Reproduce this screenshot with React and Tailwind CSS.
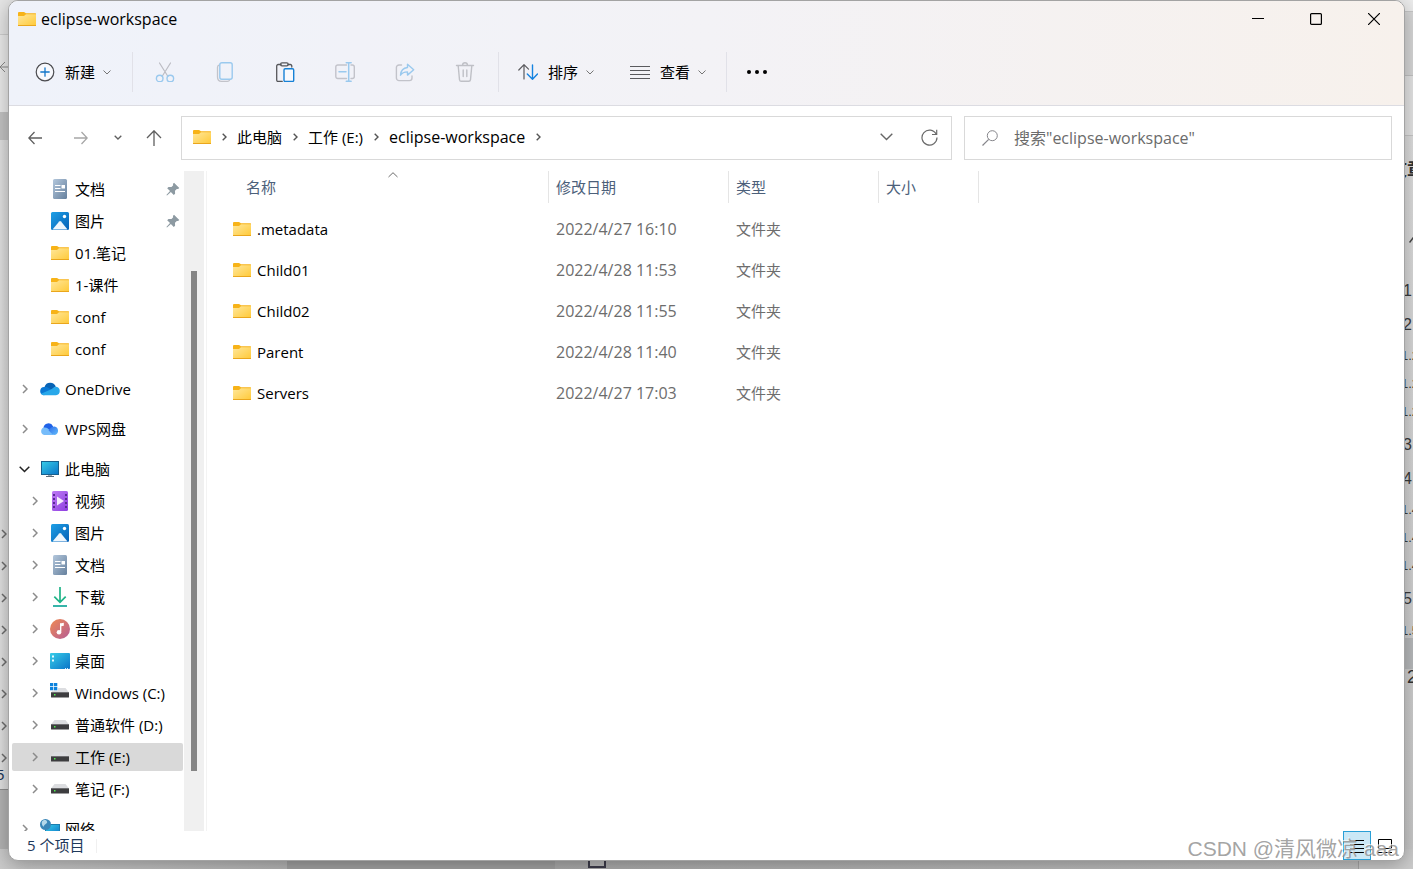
import { useState } from "react";

// ---------- icons ----------

const FolderIcon = () => (
  <svg width="18" height="14" viewBox="0 0 18 14" className="shrink-0">
    <defs>
      <linearGradient id="folderFront" x1="0" y1="0" x2="1" y2="1">
        <stop offset="0" stopColor="#ffe79b" />
        <stop offset="1" stopColor="#ffc937" />
      </linearGradient>
    </defs>
    <path d="M0 1a1 1 0 0 1 1-1h5l2 1.300h9.500a.5.5 0 0 1 .5.500V5H0z" fill="#f7b318" />
    <path d="M0 4h6l2-1.700h10V13.500a.5.5 0 0 1-.5.500H.5a.5.5 0 0 1-.5-.5z" fill="url(#folderFront)" />
    <path d="M0 13h18v.5a.5.5 0 0 1-.5.500H.5a.5.5 0 0 1-.5-.5z" fill="#eaa61c" />
  </svg>
);

const ChevronIcon = ({ className, d = "M1 1l4 4-4 4", w = 6, h = 10, width = "1.5" }) => (
  <svg width={w} height={h} viewBox={`0 0 ${w} ${h}`} fill="none" stroke="currentColor" strokeWidth={width} className={`shrink-0 ${className}`}>
    <path d={d} />
  </svg>
);

const SmallDown = () => <ChevronIcon className="text-[#757575]" d="M.5.5l3.500 3.500L7.500.5" w={8} h={5} width="1" />;

const Stroke = ({ size = 20, children }) => (
  <svg width={size} height={size} viewBox={`0 0 ${size} ${size}`} fill="none" className="shrink-0" strokeLinecap="round" strokeLinejoin="round">
    {children}
  </svg>
);

const NewIcon = () => (
  <Stroke>
    <circle cx="10" cy="10" r="8.800" stroke="#4b4b4f" strokeWidth="1.200" fill="#f8f9fd" />
    <path d="M10 5.800v8.400M5.800 10h8.400" stroke="#1276c9" strokeWidth="1.300" />
  </Stroke>
);

const CutIcon = () => (
  <Stroke>
    <path d="M4.500 1l8.300 13.200M15.500 1L7.200 14.200" stroke="#bcbdc4" strokeWidth="1.200" />
    <circle cx="4.700" cy="16.500" r="3.300" stroke="#9ac9ee" strokeWidth="1.400" />
    <circle cx="15.300" cy="16.500" r="3.300" stroke="#9ac9ee" strokeWidth="1.400" />
  </Stroke>
);

const CopyIcon = () => (
  <Stroke>
    <path d="M4 3.200C2.800 3.600 2.500 4.300 2.500 5.500V15c0 3 1.500 4.300 4 4.300h6c1 0 1.700-.4 2-1" stroke="#c2c3ca" strokeWidth="1.300" />
    <rect x="4.800" y=".7" width="12.400" height="16.500" rx="2" stroke="#9ac9ee" strokeWidth="1.400" />
  </Stroke>
);

const PasteIcon = () => (
  <Stroke>
    <path d="M6 2.500H3.200A1.500 1.500 0 0 0 1.700 4v14a1.500 1.500 0 0 0 1.500 1.500h4M13 2.500h2.300A1.500 1.500 0 0 1 16.800 4v1" stroke="#55565a" strokeWidth="1.300" />
    <rect x="5.600" y=".8" width="7.600" height="3" rx="1.400" stroke="#55565a" strokeWidth="1.200" />
    <rect x="9" y="6.700" width="9.700" height="12.800" rx="1.200" stroke="#1681d6" strokeWidth="1.400" fill="#f8f9fd" />
  </Stroke>
);

const RenameIcon = () => (
  <Stroke>
    <path d="M11.500 3H2.800A2 2 0 0 0 .8 5v9.500a2 2 0 0 0 2 2h8.700M16 3h1.300a2 2 0 0 1 2 2v9.500a2 2 0 0 1-2 2H16" stroke="#c2c3ca" strokeWidth="1.400" />
    <path d="M13.700 1v18M11.300.7h4.800M11.300 19.300h4.800M4 9.800h7" stroke="#9ac9ee" strokeWidth="1.500" />
  </Stroke>
);

const ShareIcon = () => (
  <Stroke>
    <path d="M6.500 3H4a2.600 2.600 0 0 0-2.600 2.600V16A2.600 2.600 0 0 0 4 18.600h10.400A2.600 2.600 0 0 0 17 16v-2" stroke="#c2c3ca" strokeWidth="1.400" />
    <path d="M12.500 2.300l6.200 5.400-6.200 5.400v-3.200c-3.500 0-5.600 1-7 3.300.3-4.200 2.500-7.300 7-7.700z" stroke="#9ac9ee" strokeWidth="1.400" />
  </Stroke>
);

const TrashIcon = () => (
  <Stroke>
    <path d="M1.500 3.500h17M7.500 3.300C7.600 1.600 8.500.8 10 .8s2.400.8 2.500 2.500M3.200 3.700l1.300 14a1.800 1.800 0 0 0 1.800 1.600h7.400a1.800 1.800 0 0 0 1.800-1.600l1.300-14M8.200 8v6.500M11.800 8v6.500" stroke="#bfc0c6" strokeWidth="1.400" />
  </Stroke>
);

const SortIcon = () => (
  <Stroke>
    <path d="M6 17V3M.8 8L6 2.700l4.500 4.500" stroke="#5a5a5e" strokeWidth="1.200" />
    <path d="M14.500 3v14M9.300 12l5.200 5.300L19.500 12" stroke="#1583e0" strokeWidth="1.400" />
  </Stroke>
);

const ViewIcon = () => (
  <svg width="20" height="20" viewBox="0 0 20 20" className="shrink-0">
    <path d="M0 4.500h20M0 8.500h20M0 12.500h20M0 16.500h20" stroke="#5a5a5e" strokeWidth="1.200" />
  </svg>
);

const DocIcon = () => (
  <svg width="20" height="20" viewBox="0 0 20 20" className="shrink-0">
    <defs>
      <linearGradient id="doc" x1="0" y1="0" x2="1" y2="1">
        <stop offset="0" stopColor="#b3c7dc" />
        <stop offset="1" stopColor="#66809d" />
      </linearGradient>
    </defs>
    <rect x="3" width="14" height="20" rx="1.500" fill="url(#doc)" />
    <path d="M5 6.500h5.500M5 9.500h5.500M5 12.500h10" stroke="#fff" strokeWidth="1.200" />
    <rect x="11.500" y="6" width="3.500" height="3.500" fill="#fff" />
  </svg>
);

const PictureIcon = () => (
  <svg width="20" height="20" viewBox="0 0 20 20" className="shrink-0">
    <defs>
      <linearGradient id="pic" x1="0" y1="0" x2="1" y2="1">
        <stop offset="0" stopColor="#1ea0e6" />
        <stop offset="1" stopColor="#0660b6" />
      </linearGradient>
    </defs>
    <rect x="1" y="1" width="18" height="18" rx="1.500" fill="url(#pic)" />
    <path d="M2.500 18.500l6.700-8a1.200 1.200 0 0 1 1.800 0l6.500 8z" fill="#eef6fd" />
    <circle cx="14.500" cy="5.500" r="1.700" fill="#fff" />
  </svg>
);

const OneDriveIcon = () => (
  <svg width="20" height="14" viewBox="0 0 20 14" className="shrink-0">
    <path d="M4.500 5A6 6 0 0 1 15.800 4.600L10 9z" fill="#0863b5" />
    <path d="M4 13.200A4.100 4.100 0 0 1 4.600 5c2-.4 3.600.4 5 1.400L13 9 4 13.200z" fill="#0a78d4" />
    <path d="M12 7c1-1.500 2.500-2.500 4.200-2.300A4.300 4.300 0 0 1 16 13.200H4c-1.200 0-2.300-.6-3-1.500z" fill="#28a8ea" />
  </svg>
);

const WpsCloudIcon = () => (
  <svg width="20" height="14" viewBox="0 0 20 14" className="shrink-0">
    <defs>
      <linearGradient id="wps" x1="0" y1="0" x2="1" y2="1">
        <stop offset="0" stopColor="#2d6bea" />
        <stop offset="1" stopColor="#62bdfb" />
      </linearGradient>
    </defs>
    <path d="M3.500 6A5 5 0 0 1 13 4.200c.2 2-.7 4-2.500 6z" fill="#1f62e8" />
    <path d="M4.500 5.500c3 0 4.200 1.600 5.800 3.800 1.300 1.900 2.200 3 4.200 3.700H4.200a3.800 3.800 0 0 1 .3-7.500z" fill="#76bcfa" />
    <path d="M8.500 8.300c1.800-2.400 3.400-3.800 6-3.800a4.400 4.400 0 0 1 .5 8.500c-3 0-4.500-2.700-6.500-4.700z" fill="url(#wps)" />
  </svg>
);

const ScreenGradient = ({ id }) => (
  <linearGradient id={id} x1="0" y1="0" x2="1" y2="1">
    <stop offset="0" stopColor="#37cde8" />
    <stop offset="1" stopColor="#0b74c8" />
  </linearGradient>
);

const ComputerIcon = () => (
  <svg width="20" height="18" viewBox="0 0 20 18" className="shrink-0">
    <defs><ScreenGradient id="screen" /></defs>
    <path d="M8 14h4v3H8z" fill="#9aa7b3" />
    <path d="M6 16.500h8" stroke="#5d6b78" />
    <rect x="1.500" y="1.500" width="17" height="13" fill="url(#screen)" stroke="#17608e" />
  </svg>
);

const VideoIcon = () => (
  <svg width="20" height="20" viewBox="0 0 20 20" className="shrink-0">
    <defs>
      <linearGradient id="video" x1="0" y1="0" x2="1" y2="1">
        <stop offset="0" stopColor="#bd7af4" />
        <stop offset="1" stopColor="#8e3ee0" />
      </linearGradient>
    </defs>
    <rect x="2" width="16" height="20" rx="1.500" fill="url(#video)" />
    <path d="M4 3v15M16 3v15" stroke="#5a2a94" strokeWidth="2" strokeDasharray="2 2" />
    <path d="M7 5.500v9l7-4.500z" fill="#f5ecfd" />
  </svg>
);

const DownloadIcon = () => (
  <svg width="20" height="20" viewBox="0 0 20 20" fill="none" className="shrink-0">
    <path d="M10 0v15M4.300 9.700L10 15.300l5.700-5.600" stroke="#1fb488" strokeWidth="1.700" />
    <path d="M3 19h14" stroke="#14a79a" strokeWidth="1.700" />
  </svg>
);

const MusicIcon = () => (
  <svg width="20" height="20" viewBox="0 0 20 20" className="shrink-0">
    <defs>
      <linearGradient id="music" x1="0" y1="0" x2="1" y2="1">
        <stop offset="0" stopColor="#f08a52" />
        <stop offset="1" stopColor="#b45d97" />
      </linearGradient>
    </defs>
    <circle cx="10" cy="10" r="10" fill="url(#music)" />
    <path d="M10 4.500l3.800-.8v3l-2.600.6v5.600z" fill="#fff" />
    <path d="M10 4.500h1.200V13H10z" fill="#fff" />
    <circle cx="9" cy="13.200" r="2.300" fill="#fff" />
  </svg>
);

const DesktopIcon = () => (
  <svg width="20" height="16" viewBox="0 0 20 16" className="shrink-0">
    <defs><ScreenGradient id="desk" /></defs>
    <rect width="20" height="16" rx="1" fill="url(#desk)" />
    <path d="M2 2.500h2v2H2zM2 6.500h2v2H2z" fill="#e8fbff" />
    <path d="M15 15.500h1M17 15.500h1" stroke="#cfeaff" />
  </svg>
);

const DriveIcon = ({ system }) => (
  <svg width="20" height="20" viewBox="0 0 20 20" className="shrink-0">
    <path d="M4.500 5h11L19 9.500H1z" fill="#dcdde0" />
    <rect x="1" y="9" width="18" height="5.500" rx=".5" fill="#3d3d3f" />
    <path d="M1 9.500h18" stroke="#6f6f72" />
    <rect x="4" y="11" width="1.500" height="1.500" fill="#4df04d" />
    {system && (
      <g>
        <path d="M0 0h8v7.500H0z" fill="#fff" />
        <path d="M0 0h3.300v3.300H0zM4 0h3.300v3.300H4zM0 4h3.300v3.300H0zM4 4h3.300v3.300H4z" fill="#0c82dc" />
      </g>
    )}
  </svg>
);

const NetworkIcon = () => (
  <svg width="20" height="20" viewBox="0 0 20 20" className="shrink-0">
    <defs><ScreenGradient id="net" /></defs>
    <rect x="5.500" y="5.500" width="14" height="11" fill="url(#net)" stroke="#1b7eaf" />
    <circle cx="5.500" cy="5.500" r="5.500" fill="#3b86b8" />
    <path d="M2 2.500c2-2 4-1.800 5 0S4.500 5 4 7 1 5 2 2.500z" fill="#b5d8ea" />
  </svg>
);

const PinIcon = () => (
  <svg width="14" height="14" viewBox="0 0 14 14" className="shrink-0">
    <path d="M8 .8L13.300 6l-1.200 1.100-1.300-.2-1.800 1.800.1 3-1.400 1.300L4.900 10 1 13.600l-.6-.6L4 9.100 1.200 6.300l1.300-1.400 3 .1 1.700-1.800L6.900 2z" fill="#8d9aa2" />
  </svg>
);

// ---------- data ----------

const quickItems = [
  { label: "文档", Icon: DocIcon, pinned: true },
  { label: "图片", Icon: PictureIcon, pinned: true },
  { label: "01.笔记", Icon: FolderIcon },
  { label: "1-课件", Icon: FolderIcon },
  { label: "conf", Icon: FolderIcon },
  { label: "conf", Icon: FolderIcon },
];

const pcItems = [
  { label: "视频", Icon: VideoIcon },
  { label: "图片", Icon: PictureIcon },
  { label: "文档", Icon: DocIcon },
  { label: "下载", Icon: DownloadIcon },
  { label: "音乐", Icon: MusicIcon },
  { label: "桌面", Icon: DesktopIcon },
  { label: "Windows (C:)", Icon: () => <DriveIcon system /> },
  { label: "普通软件 (D:)", Icon: DriveIcon },
  { label: "工作 (E:)", Icon: DriveIcon },
  { label: "笔记 (F:)", Icon: DriveIcon },
];

const files = [
  { name: ".metadata", date: "2022/4/27 16:10" },
  { name: "Child01", date: "2022/4/28 11:53" },
  { name: "Child02", date: "2022/4/28 11:55" },
  { name: "Parent", date: "2022/4/28 11:40" },
  { name: "Servers", date: "2022/4/27 17:03" },
];

const editTools = [
  { label: "剪切", Icon: CutIcon },
  { label: "复制", Icon: CopyIcon },
  { label: "粘贴", Icon: PasteIcon },
  { label: "重命名", Icon: RenameIcon },
  { label: "共享", Icon: ShareIcon },
  { label: "删除", Icon: TrashIcon },
];

const outline = [
  { text: "1", top: "top-[281px]" },
  { text: "2", top: "top-[315px]" },
  { text: "1.2", top: "top-[346px]", sub: true },
  { text: "1.2", top: "top-[374px]", sub: true },
  { text: "1.2", top: "top-[402px]", sub: true },
  { text: "3", top: "top-[435px]" },
  { text: "4", top: "top-[469px]" },
  { text: "1.4", top: "top-[500px]", sub: true },
  { text: "1.4", top: "top-[528px]", sub: true },
  { text: "1.4", top: "top-[556px]", sub: true },
  { text: "5", top: "top-[589px]" },
  { text: "1.5", top: "top-[621px]", sub: true },
];

// ---------- parts ----------

// windows that lie behind the explorer, only their edges are visible
const Backdrop = () => (
  <div className="absolute inset-0 overflow-hidden bg-[#b4b4b4] font-['Liberation_Sans','Noto_Sans_CJK_SC',sans-serif]" aria-hidden="true">
    <div className="absolute left-0 top-0 h-[790px] w-6 border-b border-[#8f8f8f] bg-linear-to-r from-[#e2e2e2] to-[#cfcfcf]">
      <div className="h-[35px] border-b border-[#cfcfcf] bg-[#e6e6e6]" />
      <div className="h-[77px] bg-[#ebebeb]" />
      <div className="h-7 bg-[#c4c4c4]" />
      <svg width="9" height="10" viewBox="0 0 9 10" className="absolute left-0 top-[62px]" fill="none" stroke="#8a8a8a">
        <path d="M5 0L0 5l5 5M0 5h9" />
      </svg>
      <div className="absolute left-[1px] top-[529px] flex flex-col gap-[22px] text-[#6e6e6e]">
        {[0, 1, 2, 3, 4, 5, 6, 7].map((i) => (
          <ChevronIcon key={i} />
        ))}
      </div>
      <span className="absolute -left-[4px] top-[765px] text-[15px] leading-5 text-[#1e395b]">5</span>
    </div>
    <div className="absolute right-0 top-0 h-full w-6 bg-linear-to-b from-[#e3e3e3] to-[#cacaca]">
      <div className="h-[12px] border-b border-[#c8c8c8] bg-[#ededed]" />
      <div className="h-[64px] border-b border-[#c4c4c4] bg-[#d9d9d9]" />
      <div className="h-[60px] border-b border-[#c8c8c8] bg-[#e6e6e6]" />
      <span className="absolute left-0 top-[158px] whitespace-nowrap text-[18px] font-bold leading-6 text-[#333]">文章</span>
      <svg width="8" height="6" viewBox="0 0 8 6" className="absolute left-[20px] top-[237px]" fill="none" stroke="#444" strokeWidth="1.500">
        <path d="M.5 5.500L4 1l3.500 4.500" />
      </svg>
      {outline.map((o) => (
        <span key={o.top} className={`absolute ${o.top} leading-5 text-[#3c3c3c] ${o.sub ? "left-[12px] text-[13px]" : "left-[14px] text-[16px]"}`}>
          {o.text}
        </span>
      ))}
      <div className="absolute left-0 top-[638px] h-[31px] w-full bg-[#b9bbbd]" />
      <span className="absolute left-[18px] top-[665px] text-[18px] leading-6 text-[#333]">2</span>
    </div>
    <div className="absolute bottom-0 left-0 flex h-5 w-full">
      <div className="w-[287px] bg-linear-to-r from-[#cbcbcb] to-[#b6b6b6]" />
      <div className="w-[268px] bg-[#a2a2a2]" />
      <div className="flex-1 bg-linear-to-r from-[#acacac] to-[#c4c4c4]" />
      <div className="w-[55px] border-l border-[#a8a8a8] bg-[#cdcdcd]" />
    </div>
    <div className="absolute bottom-[1px] left-[588px] h-[14px] w-[18px] border-2 border-[#3d3c4a] bg-[#bbb]" />
  </div>
);

const Divider = ({ className }) => <div className={`h-10 w-px shrink-0 bg-[#e1e1e8] ${className}`} />;

const MenuButton = ({ label, Icon, className }) => (
  <button type="button" className={`flex shrink-0 items-center gap-[10px] ${className}`}>
    <Icon />
    <span className="w-[30px] whitespace-nowrap">{label}</span>
    <span className="-ml-[2px]"><SmallDown /></span>
  </button>
);

const Header = () => (
  <header className="shrink-0 border-b border-[#dcdce2] bg-linear-to-r from-[#eff2fa] via-[#f3f2f6] to-[#f7f1ec]">
    <div className="flex h-9 items-center pl-[9px]">
      <FolderIcon />
      <h1 className="ml-[5px] flex-1 text-base leading-5">eclipse-workspace</h1>
      <button type="button" aria-label="最小化" className="flex h-full w-[58px] items-center justify-center">
        <svg width="12" height="12" viewBox="0 0 12 12"><path d="M0 5.500h12" stroke="#000" /></svg>
      </button>
      <button type="button" aria-label="最大化" className="flex h-full w-[58px] items-center justify-center">
        <svg width="12" height="12" viewBox="0 0 12 12" fill="none"><rect x=".6" y=".6" width="10.800" height="10.800" rx="1" stroke="#000" strokeWidth="1.200" /></svg>
      </button>
      <button type="button" aria-label="关闭" className="mr-[1px] flex h-full w-[58px] items-center justify-center">
        <svg width="12" height="12" viewBox="0 0 12 12"><path d="M0 0l12 12M12 0L0 12" stroke="#000" strokeWidth="1.200" /></svg>
      </button>
    </div>
    <div className="flex h-[68px] items-center pl-[26px] pt-[2px]">
      <MenuButton label="新建" Icon={NewIcon} />
      <Divider className="ml-[21px] mr-[2px]" />
      {editTools.map(({ label, Icon }) => (
        <button key={label} type="button" aria-label={label} className="flex h-10 w-[60px] shrink-0 items-center justify-center">
          <Icon />
        </button>
      ))}
      <Divider className="ml-[3px]" />
      <MenuButton label="排序" Icon={SortIcon} className="ml-[19px]" />
      <MenuButton label="查看" Icon={ViewIcon} className="ml-9" />
      <Divider className="ml-5" />
      <button type="button" aria-label="更多" className="flex h-10 w-[60px] shrink-0 items-center justify-center">
        <svg width="20" height="4" viewBox="0 0 20 4">
          <circle cx="2" cy="2" r="2" /><circle cx="10" cy="2" r="2" /><circle cx="18" cy="2" r="2" />
        </svg>
      </button>
    </div>
  </header>
);

const CrumbArrow = () => (
  <span className="flex w-[26px] shrink-0 justify-center">
    <ChevronIcon className="text-[#555]" d="M.7.7L4 4 .7 7.300" w={5} h={8} width="1.400" />
  </span>
);

const AddressBar = () => {
  const [query, setQuery] = useState("");
  const navButton = "flex h-11 shrink-0 items-center justify-center";

  return (
    <div className="flex h-[65px] shrink-0 items-start pl-[3px] pr-3 pt-[10px]">
      <button type="button" aria-label="后退" className={`${navButton} w-[46px]`}>
        <svg width="14" height="14" viewBox="0 0 14 14" fill="none" stroke="#5f5f5f" strokeWidth="1.300"><path d="M14 7H.8M6.500 1L.8 7l5.700 6" /></svg>
      </button>
      <button type="button" aria-label="前进" className={`${navButton} w-[46px]`}>
        <svg width="14" height="14" viewBox="0 0 14 14" fill="none" stroke="#a6a6a6" strokeWidth="1.300"><path d="M0 7h13.200M7.500 1l5.700 6-5.700 6" /></svg>
      </button>
      <button type="button" aria-label="最近浏览的位置" className={`${navButton} w-7 pb-[2px]`}>
        <ChevronIcon className="text-[#5f5f5f]" d="M.7.7L4 4 7.300.7" w={8} h={5} width="1.300" />
      </button>
      <button type="button" aria-label="上移" className={`${navButton} w-11`}>
        <svg width="16" height="16" viewBox="0 0 16 16" fill="none" stroke="#5f5f5f" strokeWidth="1.300"><path d="M8 16V.8M1 8l7-7.200L15 8" /></svg>
      </button>
      <div className="ml-[5px] flex h-11 min-w-0 flex-1 items-center border border-[#d9d9d9] pb-[2px] pl-[11px]">
        <FolderIcon />
        <CrumbArrow />
        <a href="#" className="whitespace-nowrap">此电脑</a>
        <CrumbArrow />
        <a href="#" className="whitespace-nowrap">工作 (E:)</a>
        <CrumbArrow />
        <a href="#" className="whitespace-nowrap text-base leading-5">eclipse-workspace</a>
        <CrumbArrow />
        <button type="button" aria-label="历史记录" className="ml-auto flex h-full w-[43px] shrink-0 items-center justify-center">
          <ChevronIcon className="text-[#666]" d="M.7.7l5.800 5.800L12.300.7" w={13} h={8} width="1.400" />
        </button>
        <button type="button" aria-label="刷新" className="flex h-full w-[43px] shrink-0 items-center justify-center">
          <svg width="17" height="17" viewBox="0 0 17 17" fill="none" stroke="#6b6b6b" strokeWidth="1.200">
            <path d="M15.200 5.200A7.500 7.500 0 1 0 16 8.500M15.700.8v4.700H11" />
          </svg>
        </button>
      </div>
      <label className="ml-3 flex h-11 w-[428px] items-center border border-[#d9d9d9] pl-[17px]">
        <svg width="16" height="16" viewBox="0 0 16 16" fill="none" stroke="#85858a" className="shrink-0">
          <circle cx="10.300" cy="5.700" r="5" /><path d="M6.700 9.300L.5 15.500" strokeWidth="1.200" />
        </svg>
        <input
          type="text"
          aria-label="搜索"
          placeholder={'搜索"eclipse-workspace"'}
          value={query}
          onChange={(e) => setQuery(e.target.value)}
          className="ml-4 min-w-0 flex-1 bg-transparent text-base leading-5 outline-none placeholder:text-[#6b6b6b]"
        />
      </label>
    </div>
  );
};

const IconCell = ({ Icon }) => (
  <span className="flex w-5 shrink-0 justify-center"><Icon /></span>
);

// top level entry, expanded or collapsed
const RootItem = ({ label, Icon, open }) => (
  <a href="#" className="mt-2 flex h-8 shrink-0 items-center">
    <span className="flex w-[31px] shrink-0 justify-center">
      {open ? (
        <ChevronIcon className="text-[#222]" d="M.7.700l4.800 4.800L10.300.7" w={11} h={7} width="1.500" />
      ) : (
        <ChevronIcon className="text-[#8b8b8b]" />
      )}
    </span>
    <IconCell Icon={Icon} />
    <span className="ml-[5px] whitespace-nowrap">{label}</span>
  </a>
);

const ChildItem = ({ label, Icon, pinned, arrow, selected, onClick }) => (
  <a href="#" onClick={onClick} className={`my-[2px] ml-[3px] mr-[1px] flex h-7 shrink-0 items-center rounded-[2px] ${selected ? "bg-[#d9d9d9]" : ""}`}>
    <span className="flex w-[38px] shrink-0 justify-center pl-2">
      {arrow && <ChevronIcon className="text-[#8b8b8b]" />}
    </span>
    <IconCell Icon={Icon} />
    <span className="ml-[5px] flex-1 whitespace-nowrap">{label}</span>
    {pinned && <span className="mr-[3px]"><PinIcon /></span>}
  </a>
);

const Sidebar = () => {
  const [selected, setSelected] = useState("工作 (E:)");

  return (
    <div className="flex w-[198px] shrink-0 border-r border-[#f3f3f3]">
      <nav className="flex w-[175px] shrink-0 flex-col overflow-hidden pt-[2px]">
        {quickItems.map((item, i) => (
          <ChildItem key={i} {...item} />
        ))}
        <RootItem label="OneDrive" Icon={OneDriveIcon} />
        <RootItem label="WPS网盘" Icon={WpsCloudIcon} />
        <RootItem label="此电脑" Icon={ComputerIcon} open />
        {pcItems.map((item) => (
          <ChildItem key={item.label} {...item} arrow selected={selected === item.label} onClick={() => setSelected(item.label)} />
        ))}
        <RootItem label="网络" Icon={NetworkIcon} />
      </nav>
      <div className="flex w-5 shrink-0 flex-col items-center bg-[#f0f0f0] pb-[60px] pt-[100px]">
        <div className="w-[6px] flex-1 bg-[#858585]" />
      </div>
    </div>
  );
};

const FileTable = () => (
  <div className="min-w-0 flex-1 overflow-hidden">
    <table className="table-fixed text-left">
      <thead>
        <tr className="text-[#4c607a]">
          {[
            { label: "名称", width: "w-[342px]", pad: "pl-[39px]" },
            { label: "修改日期", width: "w-[180px]", pad: "pl-[7px]" },
            { label: "类型", width: "w-[150px]", pad: "pl-[7px]" },
            { label: "大小", width: "w-[100px]", pad: "pl-[7px]" },
          ].map((col, i) => (
            <th key={col.label} className={`p-0 pb-[5px] font-normal ${col.width}`}>
              <div className={`relative flex h-8 items-center border-r border-[#e5e5e5] ${col.pad}`}>
                {col.label}
                {i === 0 && (
                  <span className="absolute left-[181px] top-[1px] leading-none">
                    <ChevronIcon className="text-[#6d6d6d]" d="M.5 5L5 .7 9.500 5" w={10} h={6} width="1" />
                  </span>
                )}
              </div>
            </th>
          ))}
        </tr>
      </thead>
      <tbody className="text-[#6d6d6d]">
        {files.map((file) => (
          <tr key={file.name} className="h-[41px]">
            <td className="p-0 pl-[26px]">
              <a href="#" className="flex items-center gap-[6px] text-black">
                <FolderIcon />
                {file.name}
              </a>
            </td>
            <td className="p-0 pl-[7px] text-base leading-5">{file.date}</td>
            <td className="p-0 pl-[7px]">文件夹</td>
            <td className="p-0" />
          </tr>
        ))}
      </tbody>
    </table>
  </div>
);

const StatusBar = () => (
  <footer className="flex h-[29px] shrink-0 items-center pl-[18px] text-[#1e395b]">
    <span className="pb-[2px]">5 个项目</span>
    <div className="ml-3 h-[14px] w-px bg-[#f0f0f0]" />
    <button type="button" aria-label="详细信息" className="ml-auto flex h-full w-7 items-center justify-center border border-[#2a9fd6] bg-[#cbe8f6]">
      <svg width="14" height="14" viewBox="0 0 14 14"><path d="M0 1.500h14M0 5.500h14M0 9.500h14M0 13.500h14" stroke="#000" /></svg>
    </button>
    <button type="button" aria-label="大图标" className="mr-[5px] flex h-full w-7 items-center justify-center">
      <svg width="14" height="14" viewBox="0 0 14 14" fill="none" stroke="#000"><path d="M.5.5h13v9H.5zM0 13.500h14" /></svg>
    </button>
  </footer>
);

const App = () => {
  return (
    <div className="relative h-screen overflow-hidden px-2 pb-2 font-['Open_Sans','Noto_Sans_CJK_SC',sans-serif] text-[15px] leading-5 text-black">
      <Backdrop />
      <main className="relative flex h-full flex-col overflow-hidden rounded-[10px] border border-[#a3a3a3] bg-white shadow-[0_4px_20px_rgba(0,0,0,0.3)]">
        <Header />
        <AddressBar />
        <div className="flex min-h-0 flex-1">
          <Sidebar />
          <FileTable />
        </div>
        <StatusBar />
      </main>
      <span className="pointer-events-none absolute bottom-[6px] right-[14px] whitespace-nowrap font-['Liberation_Sans','Noto_Sans_CJK_SC',sans-serif] text-[21px] leading-7 text-[#8c8c8c]/80 [text-shadow:-1px_-1px_0_#ffffffaa]">
        CSDN @清风微凉 aaa
      </span>
    </div>
  );
};

export default App;
